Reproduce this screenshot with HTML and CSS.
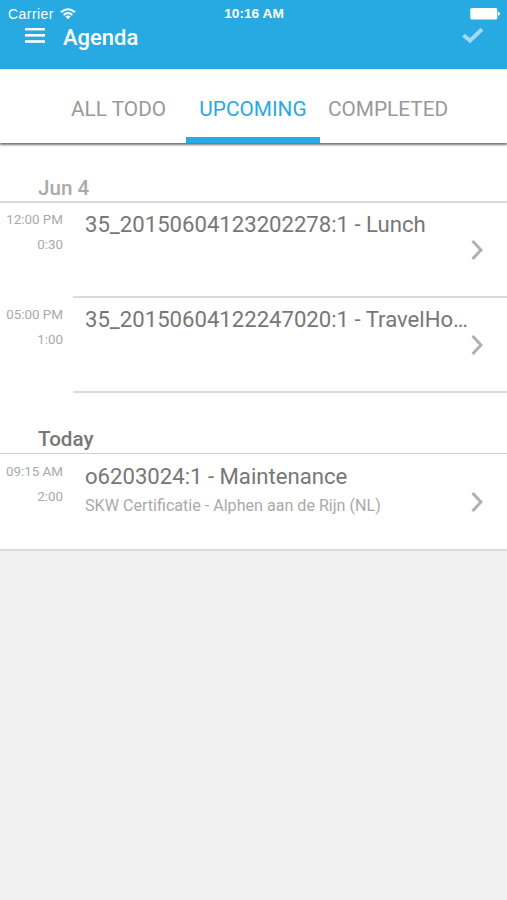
FILE: index.html
```
<!DOCTYPE html>
<html lang="en">
<head>
    <meta charset="UTF-8">
    <title>Agenda</title>
    <link rel="stylesheet" href="styles.css">
</head>
<body>
<header class="header">
    <div class="status">
        <div class="carrier">
            <span>Carrier</span>
            <svg class="wifi" width="16" height="12" viewBox="0 0 16 12" fill="none" stroke="#fff" stroke-width="1.9">
                <path d="M1 4.3Q8 -1.9 15 4.3"/>
                <path d="M3.6 7Q8 3.2 12.4 7"/>
                <path d="M5.4 8.5Q8 6.5 10.6 8.5L8 11.2Z" fill="#fff" stroke="none"/>
            </svg>
        </div>
        <span class="clock">10:16 AM</span>
        <svg class="battery" width="30" height="12" viewBox="0 0 30 12" fill="#fff">
            <rect x="0.3" y="0" width="27" height="11.4" rx="1.5"/>
            <path d="M28 3.7Q30 4 30 5.7T28 7.7Z"/>
        </svg>
    </div>
    <div class="bar">
        <svg class="menu" width="20" height="18" viewBox="0 0 20 18" fill="#fff">
            <rect y="-0.2" width="20" height="2.6"/>
            <rect y="6" width="20" height="2.6"/>
            <rect y="12.2" width="20" height="2.6"/>
        </svg>
        <h1 class="title">Agenda</h1>
        <svg class="check" width="22" height="18" viewBox="0 0 22 18" fill="none" stroke="#a3d9f3" stroke-width="4">
            <path d="M1.5 7.2L8 12.6L20 1.2"/>
        </svg>
    </div>
</header>

<nav class="tabs">
    <a class="tab tab-all">ALL TODO</a>
    <a class="tab active">UPCOMING</a>
    <a class="tab tab-done">COMPLETED</a>
</nav>

<main class="agenda">
    <h2 class="day">Jun 4</h2>
    <div class="item">
        <div class="time"><p>12:00 PM</p><p>0:30</p></div>
        <div class="info">
            <p class="name">35_20150604123202278:1 - Lunch</p>
            <svg class="arrow" width="12" height="22" viewBox="0 0 12 22"><path d="M1.5 2L10 11L1.5 20"/></svg>
        </div>
    </div>
    <div class="item">
        <div class="time"><p>05:00 PM</p><p>1:00</p></div>
        <div class="info">
            <p class="name">35_20150604122247020:1 - TravelHours</p>
            <svg class="arrow" width="12" height="22" viewBox="0 0 12 22"><path d="M1.5 2L10 11L1.5 20"/></svg>
        </div>
    </div>
    <h2 class="day today">Today</h2>
    <div class="item last">
        <div class="time"><p>09:15 AM</p><p>2:00</p></div>
        <div class="info">
            <div class="text">
                <p class="name">o6203024:1 - Maintenance</p>
                <p class="place">SKW Certificatie - Alphen aan de Rijn (NL)</p>
            </div>
            <svg class="arrow" width="12" height="22" viewBox="0 0 12 22"><path d="M1.5 2L10 11L1.5 20"/></svg>
        </div>
    </div>
</main>
</body>
</html>
```
FILE: styles.css
```
*{
    margin:0;
    padding:0;
    box-sizing: border-box;
}
body{
    height: 900px;
    background: #f0f0f0;
    font-family: Roboto, sans-serif;
    overflow: hidden;
}
.header{
    height: 69px;
    background: #27aae2;
    color: white;
}
.status{
    display: grid;
    grid-template-columns: 1fr auto 1fr;
    height: 26px;
    align-items: center;
    padding: 1px 7px 0 8px;
    font: 14px/24px "Liberation Sans", Arial, sans-serif;
}
.carrier{
    display: flex;
    align-items: center;
    gap: 6px;
    letter-spacing: 0.45px;
}
.clock{
    font-size: 13.7px;
    font-weight: bold;
}
.battery{
    justify-self: end;
}
.bar{
    display: flex;
    align-items: center;
    height: 22px;
    padding: 0 23px 0 25px;
}
.menu{
    margin-right: 18px;
}
.title{
    flex: 1;
    padding-top: 2px;
    font-size: 22px;
    font-weight: 500;
    line-height: 22px;
}
.tabs{
    position: relative;
    display: flex;
    height: 74px;
    background: white;
    box-shadow: 0 2px 2px rgba(0,0,0,0.55);
}
.tab{
    padding-top: 27px;
    font-size: 20.8px;
    line-height: 27px;
    color: #999;
}
.tab-all{
    width: 186px;
    padding-left: 71px;
}
.tab-done{
    padding-left: 8px;
}
.active{
    width: 134px;
    color: #27aae2;
    text-align: center;
    border-bottom: 6px solid #27aae2;
}
.agenda{
    background: white;
    border-bottom: 2px solid #dadada;
}
.day{
    height: 60px;
    padding: 32px 0 0 38px;
    border-bottom: 2px solid #dadada;
    font-size: 20.6px;
    font-weight: 500;
    line-height: 27px;
    color: #aaa;
}
.today{
    height: 61px;
    padding-top: 33px;
    border-bottom-width: 1px;
    border-color: #d0d0d0;
    color: #777;
}
.item{
    display: flex;
    height: 95px;
}
.time{
    width: 73px;
    padding: 5px 10px 0 0;
    font-size: 13.4px;
    line-height: 24.5px;
    text-align: right;
    color: #aaa;
}
.info{
    flex: 1;
    min-width: 0;
    display: flex;
    flex-wrap: wrap;
    justify-content: flex-end;
    align-content: flex-start;
    padding: 8px 24px 0 12px;
    border-bottom: 2px solid #dadada;
}
.last{
    padding-top: 1px;
}
.last .info{
    border: none;
}
.name{
    width: 100%;
    padding-right: 13px;
    font-size: 22.13px;
    line-height: 26px;
    color: #777;
    white-space: nowrap;
    overflow: hidden;
    text-overflow: ellipsis;
}
.text{
    width: 100%;
    height: 26px;
}
.place{
    font-size: 16.1px;
    line-height: 33px;
    color: #aaa;
}
.arrow{
    margin-top: 2px;
    fill: none;
    stroke: #b0b0b0;
    stroke-width: 3;
}
```
